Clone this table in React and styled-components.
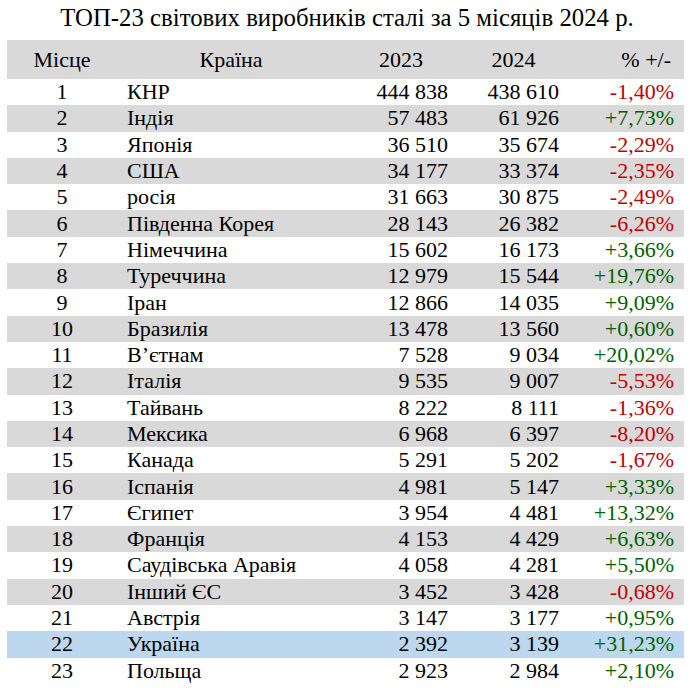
import React from 'react'
import styled, { createGlobalStyle } from 'styled-components'

const serif = '"Liberation Serif", "Times New Roman", serif'

const GlobalStyle = createGlobalStyle`
  body {
    margin: 0;
    background: #ffffff;
    font-family: ${serif};
    color: #000000;
  }
`

const Page = styled.div`
  width: 692px;
  height: 688px;
  overflow: hidden;
  padding: 0 8px 0 7px;
  box-sizing: border-box;
  font-family: ${serif};
`

const Title = styled.h1`
  margin: 0;
  height: 40px;
  line-height: 36px;
  font-family: ${serif};
  font-size: 24.8px;
  font-weight: normal;
  text-align: center;
  padding-left: 3px;
`

const Table = styled.table`
  width: 677px;
  border-collapse: collapse;
  table-layout: fixed;
  font-family: ${serif};
  font-size: 22px;
  color: #000000;
`

const HeadRow = styled.tr`
  height: 39px;
  background: #d9d9d9;
`

const Row = styled.tr`
  height: 26.3px;
  background: ${p => p.$tone === 'blue' ? '#bdd7ee' : p.$tone === 'gray' ? '#d9d9d9' : 'transparent'};
`

const Th = styled.th`
  font-family: ${serif};
  font-weight: normal;
  font-size: 22px;
  padding: 0 ${p => p.$pr || 0}px 0 0;
  text-align: ${p => p.$align || 'center'};
  line-height: 1;
`

const Td = styled.td`
  font-family: ${serif};
  font-size: 22px;
  padding: 0 ${p => p.$pr || 0}px 0 ${p => p.$pl || 0}px;
  text-align: ${p => p.$align || 'left'};
  line-height: 1;
  white-space: nowrap;
  color: ${p => p.$color || '#000000'};
`

const rows = [
  ['КНР', '444 838', '438 610', '-1,40%'],
  ['Індія', '57 483', '61 926', '+7,73%'],
  ['Японія', '36 510', '35 674', '-2,29%'],
  ['США', '34 177', '33 374', '-2,35%'],
  ['росія', '31 663', '30 875', '-2,49%'],
  ['Південна Корея', '28 143', '26 382', '-6,26%'],
  ['Німеччина', '15 602', '16 173', '+3,66%'],
  ['Туреччина', '12 979', '15 544', '+19,76%'],
  ['Іран', '12 866', '14 035', '+9,09%'],
  ['Бразилія', '13 478', '13 560', '+0,60%'],
  ['В’єтнам', '7 528', '9 034', '+20,02%'],
  ['Італія', '9 535', '9 007', '-5,53%'],
  ['Тайвань', '8 222', '8 111', '-1,36%'],
  ['Мексика', '6 968', '6 397', '-8,20%'],
  ['Канада', '5 291', '5 202', '-1,67%'],
  ['Іспанія', '4 981', '5 147', '+3,33%'],
  ['Єгипет', '3 954', '4 481', '+13,32%'],
  ['Франція', '4 153', '4 429', '+6,63%'],
  ['Саудівська Аравія', '4 058', '4 281', '+5,50%'],
  ['Інший ЄС', '3 452', '3 428', '-0,68%'],
  ['Австрія', '3 147', '3 177', '+0,95%'],
  ['Україна', '2 392', '3 139', '+31,23%'],
  ['Польща', '2 923', '2 984', '+2,10%'],
]

// every second row is shaded; Ukraine gets its own highlight
const toneFor = (i, country) => {
  if (country === 'Україна') return 'blue'
  return i % 2 === 1 ? 'gray' : 'none'
}

const App = () => {
  return (
    <Page>
      <GlobalStyle />
      <Title>ТОП-23 світових виробників сталі за 5 місяців 2024 р.</Title>
      <Table>
        <colgroup>
          <col style={{ width: 110 }} />
          <col style={{ width: 228 }} />
          <col style={{ width: 112 }} />
          <col style={{ width: 113 }} />
          <col style={{ width: 114 }} />
        </colgroup>
        <thead>
          <HeadRow>
            <Th>Місце</Th>
            <Th>Країна</Th>
            <Th>2023</Th>
            <Th>2024</Th>
            <Th $align="right" $pr={13}>% +/-</Th>
          </HeadRow>
        </thead>
        <tbody>
          {rows.map(([country, a, b, pct], i) => (
            <Row key={country} $tone={toneFor(i, country)}>
              <Td $align="center">{i + 1}</Td>
              <Td $pl={10}>{country}</Td>
              <Td $align="right" $pr={9}>{a}</Td>
              <Td $align="right" $pr={11}>{b}</Td>
              <Td $align="right" $pr={10} $color={pct.startsWith('-') ? '#c00000' : '#006100'}>{pct}</Td>
            </Row>
          ))}
        </tbody>
      </Table>
    </Page>
  )
}

export default App
